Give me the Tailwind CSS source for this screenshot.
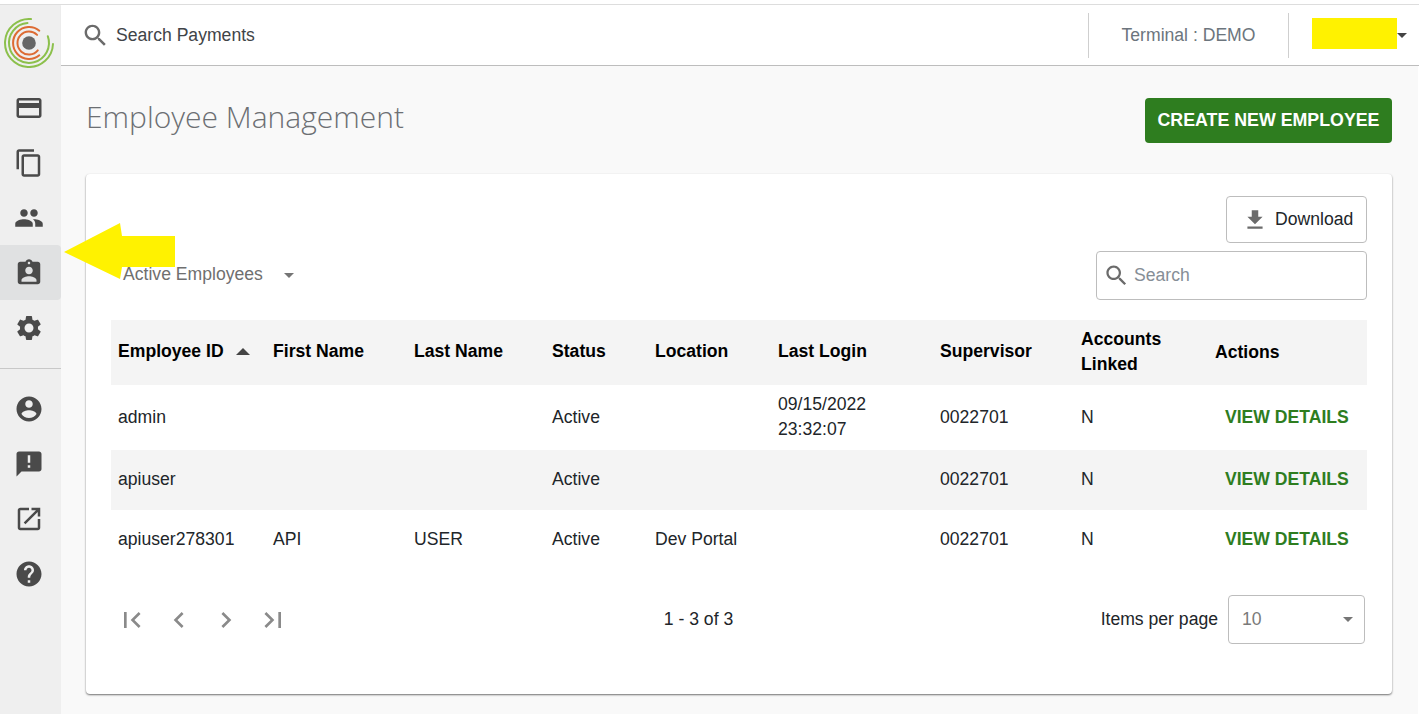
<!DOCTYPE html>
<html lang="en">
<head>
    <meta charset="UTF-8">
    <title>Employee Management</title>
    <script src="https://cdn.jsdelivr.net/npm/@tailwindcss/browser@4"></script>
</head>
<body class="h-[714px] w-[1419px] overflow-hidden bg-white font-['Liberation_Sans',Arial,sans-serif] text-[17.6px] text-[#212529]">
    <div class="h-[5px] border-b border-[#ddd] bg-white"></div>
    <div class="relative flex h-[709px]">
        <!-- Sidebar -->
        <nav class="flex w-[61px] shrink-0 flex-col bg-[#efefef] pr-[3px] text-[#4a4a4a]">
            <div class="flex h-[75px] items-start justify-center pt-[13px]">
                <svg class="h-[50px] w-[50px]" viewBox="0 0 50 50" fill="none" stroke-linecap="round">
                    <circle cx="25" cy="25" r="6.8" fill="#666"/>
                    <path d="M33.1 16.9A11.5 11.5 0 1 0 33.8 32.4" stroke="#dd6b33" stroke-width="2"/>
                    <path d="M35.3 12.7A16 16 0 1 0 35.3 37.3" stroke="#dd6b33" stroke-width="2"/>
                    <path d="M23.5 5A20 20 0 1 0 43.8 18.2" stroke="#8cc04c" stroke-width="2"/>
                    <path d="M27 1.1A24 24 0 1 0 49 26" stroke="#8cc04c" stroke-width="2"/>
                </svg>
            </div>
            <a class="flex h-[55px] items-center justify-center"><svg class="h-[30px] w-[30px]" viewBox="0 0 24 24" fill="currentColor"><path d="M20 4H4c-1.11 0-1.99.89-1.99 2L2 18c0 1.11.89 2 2 2h16c1.11 0 2-.89 2-2V6c0-1.11-.89-2-2-2zm0 14H4v-6h16v6zm0-10H4V6h16v2z"/></svg></a>
            <a class="flex h-[55px] items-center justify-center"><svg class="h-[30px] w-[30px]" viewBox="0 0 24 24" fill="currentColor"><path d="M16 1H4c-1.1 0-2 .9-2 2v14h2V3h12V1zm3 4H8c-1.1 0-2 .9-2 2v14c0 1.1.9 2 2 2h11c1.1 0 2-.9 2-2V7c0-1.1-.9-2-2-2zm0 16H8V7h11v14z"/></svg></a>
            <a class="flex h-[55px] items-center justify-center"><svg class="h-[30px] w-[30px]" viewBox="0 0 24 24" fill="currentColor"><path d="M16 11c1.66 0 2.99-1.34 2.99-3S17.66 5 16 5c-1.66 0-3 1.34-3 3s1.34 3 3 3zm-8 0c1.66 0 2.99-1.34 2.99-3S9.66 5 8 5C6.34 5 5 6.34 5 8s1.34 3 3 3zm0 2c-2.33 0-7 1.17-7 3.5V19h14v-2.5c0-2.33-4.67-3.5-7-3.5zm8 0c-.29 0-.62.02-.97.05 1.16.84 1.97 1.97 1.97 3.45V19h6v-2.5c0-2.33-4.67-3.5-7-3.5z"/></svg></a>
            <a class="-mr-[3px] flex h-[55px] items-center justify-center rounded-r-[4px] bg-[#e0e1e2] pr-[3px]"><svg class="h-[30px] w-[30px]" viewBox="0 0 24 24" fill="currentColor"><path d="M19 3h-4.18C14.4 1.84 13.3 1 12 1c-1.3 0-2.4.84-2.82 2H5c-1.1 0-2 .9-2 2v14c0 1.1.9 2 2 2h14c1.1 0 2-.9 2-2V5c0-1.1-.9-2-2-2zm-7 0c.55 0 1 .45 1 1s-.45 1-1 1-1-.45-1-1 .45-1 1-1zm0 4c1.66 0 3 1.34 3 3s-1.34 3-3 3-3-1.34-3-3 1.34-3 3-3zm6 12H6v-1.4c0-2 4-3.1 6-3.1s6 1.1 6 3.1V19z"/></svg></a>
            <a class="flex h-[55px] items-center justify-center"><svg class="h-[30px] w-[30px]" viewBox="0 0 24 24" fill="currentColor"><path d="M19.14 12.94c.04-.3.06-.61.06-.94 0-.32-.02-.64-.07-.94l2.03-1.58c.18-.14.23-.41.12-.61l-1.92-3.32c-.12-.22-.37-.29-.59-.22l-2.39.96c-.5-.38-1.03-.7-1.62-.94l-.36-2.54c-.04-.24-.24-.41-.48-.41h-3.84c-.24 0-.43.17-.47.41l-.36 2.54c-.59.24-1.13.57-1.62.94l-2.39-.96c-.22-.08-.47 0-.59.22L2.74 8.87c-.12.21-.08.47.12.61l2.03 1.58c-.05.3-.09.63-.09.94s.02.64.07.94l-2.03 1.58c-.18.14-.23.41-.12.61l1.92 3.32c.12.22.37.29.59.22l2.39-.96c.5.38 1.03.7 1.62.94l.36 2.54c.05.24.24.41.48.41h3.84c.24 0 .44-.17.47-.41l.36-2.54c.59-.24 1.13-.56 1.62-.94l2.39.96c.22.08.47 0 .59-.22l1.92-3.32c.12-.22.07-.47-.12-.61l-2.01-1.58zM12 15.6c-1.98 0-3.6-1.62-3.6-3.6s1.62-3.6 3.6-3.6 3.6 1.62 3.6 3.6-1.62 3.6-3.6 3.6z"/></svg></a>
            <div class="-mr-[3px] mt-[13px] mb-3 h-px bg-[#c8c8c8]"></div>
            <a class="flex h-[55px] items-center justify-center"><svg class="h-[30px] w-[30px]" viewBox="0 0 24 24" fill="currentColor"><path d="M12 2C6.48 2 2 6.48 2 12s4.48 10 10 10 10-4.48 10-10S17.52 2 12 2zm0 3c1.66 0 3 1.34 3 3s-1.34 3-3 3-3-1.34-3-3 1.34-3 3-3zm0 14.2c-2.5 0-4.71-1.28-6-3.22.03-1.99 4-3.08 6-3.08 1.99 0 5.97 1.09 6 3.08-1.29 1.94-3.5 3.22-6 3.22z"/></svg></a>
            <a class="flex h-[55px] items-center justify-center"><svg class="h-[30px] w-[30px]" viewBox="0 0 24 24" fill="currentColor"><path d="M20 2H4c-1.1 0-1.99.9-1.99 2L2 22l4-4h14c1.1 0 2-.9 2-2V4c0-1.1-.9-2-2-2zm-7 9h-2V5h2v6zm0 4h-2v-2h2v2z"/></svg></a>
            <a class="flex h-[55px] items-center justify-center"><svg class="h-[30px] w-[30px]" viewBox="0 0 24 24" fill="currentColor"><path d="M19 19H5V5h7V3H5c-1.11 0-2 .9-2 2v14c0 1.1.89 2 2 2h14c1.1 0 2-.9 2-2v-7h-2v7zM14 3v2h3.59l-9.83 9.83 1.41 1.41L19 6.41V10h2V3h-7z"/></svg></a>
            <a class="flex h-[55px] items-center justify-center"><svg class="h-[30px] w-[30px]" viewBox="0 0 24 24" fill="currentColor"><path d="M12 2C6.48 2 2 6.48 2 12s4.48 10 10 10 10-4.48 10-10S17.52 2 12 2zm1 17h-2v-2h2v2zm2.07-7.75l-.9.92C13.45 12.9 13 13.5 13 15h-2v-.5c0-1.1.45-2.1 1.17-2.83l1.24-1.26c.37-.36.59-.86.59-1.41 0-1.1-.9-2-2-2s-2 .9-2 2H8c0-2.21 1.79-4 4-4s4 1.79 4 4c0 .88-.36 1.68-.93 2.25z"/></svg></a>
        </nav>

        <div class="flex min-w-0 flex-1 flex-col">
            <!-- Top bar -->
            <header class="flex h-[61px] items-center border-b border-[#bdbdbd] bg-white pl-[20px] shadow-[0_1px_1px_rgba(0,0,0,0.08)]">
                <svg class="h-[29px] w-[29px] text-[#6b6b6b]" viewBox="0 0 24 24" fill="currentColor"><path d="M15.5 14h-.79l-.28-.27C15.41 12.59 16 11.11 16 9.5 16 5.91 13.09 3 9.5 3S3 5.91 3 9.5 5.91 16 9.5 16c1.61 0 3.09-.59 4.23-1.57l.27.28v.79l5 4.99L20.49 19l-4.99-5zm-6 0C7.01 14 5 11.99 5 9.5S7.01 5 9.5 5 14 7.01 14 9.5 11.99 14 9.5 14z"/></svg>
                <span class="ml-[6px] text-[#3f4448]">Search Payments</span>
                <div class="ml-auto flex h-[45px] w-[200px] items-center justify-center border-l border-[#cfcfcf] text-[#6c757d]">Terminal : DEMO</div>
                <div class="flex h-[45px] w-[131px] items-center border-l border-[#cfcfcf] pl-[23px]">
                    <div class="mb-[4px] h-[31px] w-[85px] bg-[#fff200]"></div>
                    <div class="h-0 w-0 border-x-[5px] border-t-[5px] border-x-transparent border-t-[#444]"></div>
                </div>
            </header>

            <main class="flex-1 border-r border-white bg-[#f9f9f9] pl-[25px] pr-[26px]">
                <div class="flex h-[108px] items-start justify-between">
                    <h1 class="mt-[30px] font-['Open_Sans',sans-serif] text-[30px] leading-[42px] font-light text-[#6c6f73]">Employee Management</h1>
                    <button class="mt-[32px] flex h-[45px] w-[247px] items-center justify-center rounded-[4px] bg-[#2e7d1f] text-[17.8px] font-bold text-white">CREATE NEW EMPLOYEE</button>
                </div>

                <!-- Card -->
                <section class="h-[520px] rounded-[4px] bg-white pl-[25px] pr-[25px] pt-[22px] shadow-[0_1px_2px_rgba(0,0,0,0.55)]">
                    <div class="flex justify-end">
                        <button class="flex h-[47px] w-[141px] items-center rounded-[4px] border border-[#bdbdbd] pl-[15px] text-[#212529]">
                            <svg class="h-[26px] w-[26px] text-[#6b6b6b]" viewBox="0 0 24 24" fill="currentColor"><path d="M19 9h-4V3H9v6H5l7 7 7-7zM5 18v2h14v-2H5z"/></svg>
                            <span class="ml-[7px]">Download</span>
                        </button>
                    </div>
                    <div class="mt-[8px] flex h-[49px] items-center justify-between">
                        <div class="flex items-center pl-[12px] text-[#6f6f6f]">
                            <span class="-mt-[3px]">Active Employees</span>
                            <div class="ml-[21px] h-0 w-0 border-x-[5px] border-t-[5px] border-x-transparent border-t-[#757575]"></div>
                        </div>
                        <div class="flex h-[49px] w-[271px] items-center rounded-[4px] border border-[#bdbdbd] pl-[6px] text-[#868e96]">
                            <svg class="h-[27px] w-[27px] text-[#6b6b6b]" viewBox="0 0 24 24" fill="currentColor"><path d="M15.5 14h-.79l-.28-.27C15.41 12.59 16 11.11 16 9.5 16 5.91 13.09 3 9.5 3S3 5.91 3 9.5 5.91 16 9.5 16c1.61 0 3.09-.59 4.23-1.57l.27.28v.79l5 4.99L20.49 19l-4.99-5zm-6 0C7.01 14 5 11.99 5 9.5S7.01 5 9.5 5 14 7.01 14 9.5 11.99 14 9.5 14z"/></svg>
                            <span class="ml-[4px]">Search</span>
                        </div>
                    </div>

                    <table class="mt-[20px] w-[1256px] table-fixed border-collapse text-left">
                        <colgroup>
                            <col class="w-[155px]"><col class="w-[141px]"><col class="w-[138px]"><col class="w-[103px]"><col class="w-[123px]"><col class="w-[162px]"><col class="w-[141px]"><col class="w-[134px]"><col class="w-[159px]">
                        </colgroup>
                        <thead>
                            <tr class="h-[65px] bg-[#f4f4f4] text-black">
                                <th class="pb-[2px] pl-[7px] font-bold"><span class="inline-flex items-center">Employee ID<span class="ml-[12px] h-0 w-0 border-x-[7px] border-b-[7px] border-x-transparent border-b-[#444]"></span></span></th>
                                <th class="pb-[2px] pl-[7px] font-bold">First Name</th>
                                <th class="pb-[2px] pl-[7px] font-bold">Last Name</th>
                                <th class="pb-[2px] pl-[7px] font-bold">Status</th>
                                <th class="pb-[2px] pl-[7px] font-bold">Location</th>
                                <th class="pb-[2px] pl-[7px] font-bold">Last Login</th>
                                <th class="pb-[2px] pl-[7px] font-bold">Supervisor</th>
                                <th class="pb-[2px] pl-[7px] font-bold leading-[25px]">Accounts Linked</th>
                                <th class="pl-[7px] font-bold">Actions</th>
                            </tr>
                        </thead>
                        <tbody>
                            <tr class="h-[65px]">
                                <td class="pl-[7px]">admin</td><td></td><td></td>
                                <td class="pl-[7px]">Active</td><td></td>
                                <td class="pb-[2px] pl-[7px] leading-[25px]">09/15/2022<br>23:32:07</td>
                                <td class="pl-[7px]">0022701</td>
                                <td class="pl-[7px]">N</td>
                                <td class="pl-[17px] font-bold text-[#2e7d1f]">VIEW DETAILS</td>
                            </tr>
                            <tr class="h-[60px] bg-[#f4f4f4]">
                                <td class="pb-[2px] pl-[7px]">apiuser</td><td></td><td></td>
                                <td class="pb-[2px] pl-[7px]">Active</td><td></td><td></td>
                                <td class="pb-[2px] pl-[7px]">0022701</td>
                                <td class="pb-[2px] pl-[7px]">N</td>
                                <td class="pb-[2px] pl-[17px] font-bold text-[#2e7d1f]">VIEW DETAILS</td>
                            </tr>
                            <tr class="h-[60px]">
                                <td class="pb-[2px] pl-[7px]">apiuser278301</td>
                                <td class="pb-[2px] pl-[7px]">API</td>
                                <td class="pb-[2px] pl-[7px]">USER</td>
                                <td class="pb-[2px] pl-[7px]">Active</td>
                                <td class="pb-[2px] pl-[7px]">Dev Portal</td>
                                <td></td>
                                <td class="pb-[2px] pl-[7px]">0022701</td>
                                <td class="pb-[2px] pl-[7px]">N</td>
                                <td class="pb-[2px] pl-[17px] font-bold text-[#2e7d1f]">VIEW DETAILS</td>
                            </tr>
                        </tbody>
                    </table>

                    <!-- Pagination -->
                    <div class="mt-[25px] grid h-[49px] w-[1254px] grid-cols-[191px_1fr_270px] items-center">
                        <div class="flex items-center gap-[15px] pl-[5px] text-[#8a8a8a]">
                            <svg class="h-[32px] w-[32px]" viewBox="0 0 24 24" fill="currentColor"><path d="M18.41 16.59L13.82 12l4.59-4.59L17 6l-6 6 6 6zM6 6h2v12H6z"/></svg>
                            <svg class="h-[32px] w-[32px]" viewBox="0 0 24 24" fill="currentColor"><path d="M15.41 7.41L14 6l-6 6 6 6 1.41-1.41L10.83 12z"/></svg>
                            <svg class="h-[32px] w-[32px]" viewBox="0 0 24 24" fill="currentColor"><path d="M10 6L8.59 7.41 13.17 12l-4.58 4.59L10 18l6-6z"/></svg>
                            <svg class="h-[32px] w-[32px]" viewBox="0 0 24 24" fill="currentColor"><path d="M5.59 7.41L10.18 12l-4.59 4.59L7 18l6-6-6-6zM16 6h2v12h-2z"/></svg>
                        </div>
                        <div class="text-center">1 - 3 of 3</div>
                        <div class="flex items-center justify-end">
                            <span>Items per page</span>
                            <div class="ml-[10px] flex h-[49px] w-[137px] items-center justify-between rounded-[4px] border border-[#bdbdbd] pl-[13px] pr-[11px] text-[#7a7a7a]">
                                <span>10</span>
                                <div class="h-0 w-0 border-x-[5px] border-t-[5px] border-x-transparent border-t-[#757575]"></div>
                            </div>
                        </div>
                    </div>
                </section>
            </main>
        </div>

        <!-- Yellow annotation arrow -->
        <svg class="pointer-events-none absolute left-0 top-[-5px] h-[714px] w-[200px]" viewBox="0 0 200 714">
            <polygon points="64,252 120,223 122,236 175,236 175,267 122,267 120,279" fill="#fff200"/>
        </svg>
    </div>
</body>
</html>
